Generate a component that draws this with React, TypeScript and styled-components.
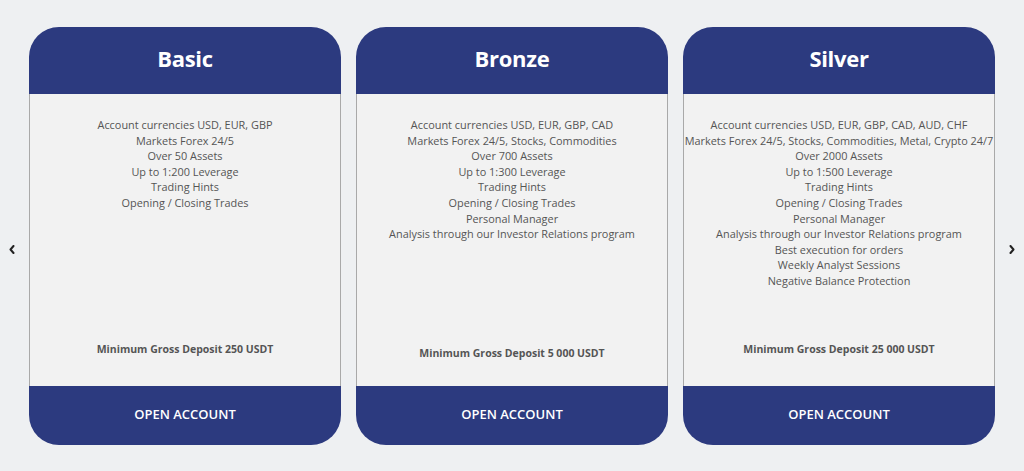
import React from 'react'
import styled, {createGlobalStyle} from 'styled-components'

const GlobalStyle = createGlobalStyle`
    body {
        margin: 0;
        background: #eef0f2;
        font-family: "Open Sans", "DejaVu Sans", sans-serif;
    }
`

type Plan = {
    name: string
    features: string[]
    deposit: string
    depositGap: number
}

const plans: Plan[] = [
    {
        name: 'Basic',
        features: [
            'Account currencies USD, EUR, GBP',
            'Markets Forex 24/5',
            'Over 50 Assets',
            'Up to 1:200 Leverage',
            'Trading Hints',
            'Opening / Closing Trades',
        ],
        deposit: 'Minimum Gross Deposit 250 USDT',
        depositGap: 30,
    },
    {
        name: 'Bronze',
        features: [
            'Account currencies USD, EUR, GBP, CAD',
            'Markets Forex 24/5, Stocks, Commodities',
            'Over 700 Assets',
            'Up to 1:300 Leverage',
            'Trading Hints',
            'Opening / Closing Trades',
            'Personal Manager',
            'Analysis through our Investor Relations program',
        ],
        deposit: 'Minimum Gross Deposit 5 000 USDT',
        depositGap: 26,
    },
    {
        name: 'Silver',
        features: [
            'Account currencies USD, EUR, GBP, CAD, AUD, CHF',
            'Markets Forex 24/5, Stocks, Commodities, Metal, Crypto 24/7',
            'Over 2000 Assets',
            'Up to 1:500 Leverage',
            'Trading Hints',
            'Opening / Closing Trades',
            'Personal Manager',
            'Analysis through our Investor Relations program',
            'Best execution for orders',
            'Weekly Analyst Sessions',
            'Negative Balance Protection',
        ],
        deposit: 'Minimum Gross Deposit 25 000 USDT',
        depositGap: 30,
    },
]

const Chevron = (props: { dir: 'left' | 'right' }) => (
    <svg width="6" height="9" viewBox="0 0 6 9">
        <path
            d={props.dir === 'left' ? 'M4.5 1 L1.5 4.5 L4.5 8' : 'M1.5 1 L4.5 4.5 L1.5 8'}
            fill="none"
            stroke="#222"
            strokeWidth="2"
            strokeLinecap="round"
            strokeLinejoin="round"
        />
    </svg>
)

const PlanCard = (props: { plan: Plan }) => {
    const {plan} = props
    return (
        <Card>
            <Header>{plan.name}</Header>
            <Body>
                <Features>
                    {plan.features.map(f => <Feature key={f}>{f}</Feature>)}
                </Features>
                <Deposit gap={plan.depositGap}>{plan.deposit}</Deposit>
            </Body>
            <Footer>OPEN ACCOUNT</Footer>
        </Card>
    )
}

export default function App() {
    return (
        <>
            <GlobalStyle/>
            <Carousel>
                <Arrow><Chevron dir="left"/></Arrow>
                <Track>
                    {plans.map(p => <PlanCard key={p.name} plan={p}/>)}
                </Track>
                <Arrow><Chevron dir="right"/></Arrow>
            </Carousel>
        </>
    )
}

const Carousel = styled.div`
    display: flex;
    align-items: center;
    height: 471px;
    box-sizing: border-box;
    padding-top: 1px;
`

const Arrow = styled.div`
    width: 24px;
    display: flex;
    justify-content: center;
    align-items: center;
    margin-top: 27px;
    cursor: pointer;
`

const Track = styled.div`
    flex: 1;
    display: flex;
    justify-content: center;
    gap: 15px;
`

const Card = styled.div`
    width: 312px;
    height: 418px;
    display: flex;
    flex-direction: column;
    border-radius: 30px;
    overflow: hidden;
    background: #f2f2f2;
`

const Header = styled.div`
    height: 67px;
    box-sizing: border-box;
    padding-bottom: 5px;
    flex-shrink: 0;
    background: #2c3a7f;
    color: #fff;
    display: flex;
    align-items: center;
    justify-content: center;
    font-size: 22px;
    font-weight: 700;
    letter-spacing: -0.3px;
`

const Body = styled.div`
    flex: 1;
    display: flex;
    flex-direction: column;
    border-left: 1px solid #a9a9a9;
    border-right: 1px solid #a9a9a9;
    padding-top: 23px;
`

const Features = styled.div`
    flex: 1;
    display: flex;
    flex-direction: column;
    align-items: center;
`

const Feature = styled.div`
    font-size: 10.9px;
    line-height: 15.6px;
    color: #555;
    white-space: nowrap;
    text-align: center;
`

const Deposit = styled.div<{ gap: number }>`
    font-size: 10.5px;
    font-weight: 700;
    color: #555;
    text-align: center;
    padding-bottom: ${p => p.gap}px;
`

const Footer = styled.div`
    height: 59px;
    box-sizing: border-box;
    padding-bottom: 4px;
    flex-shrink: 0;
    background: #2c3a7f;
    color: #fff;
    display: flex;
    align-items: center;
    justify-content: center;
    font-size: 13px;
    font-weight: 600;
`
